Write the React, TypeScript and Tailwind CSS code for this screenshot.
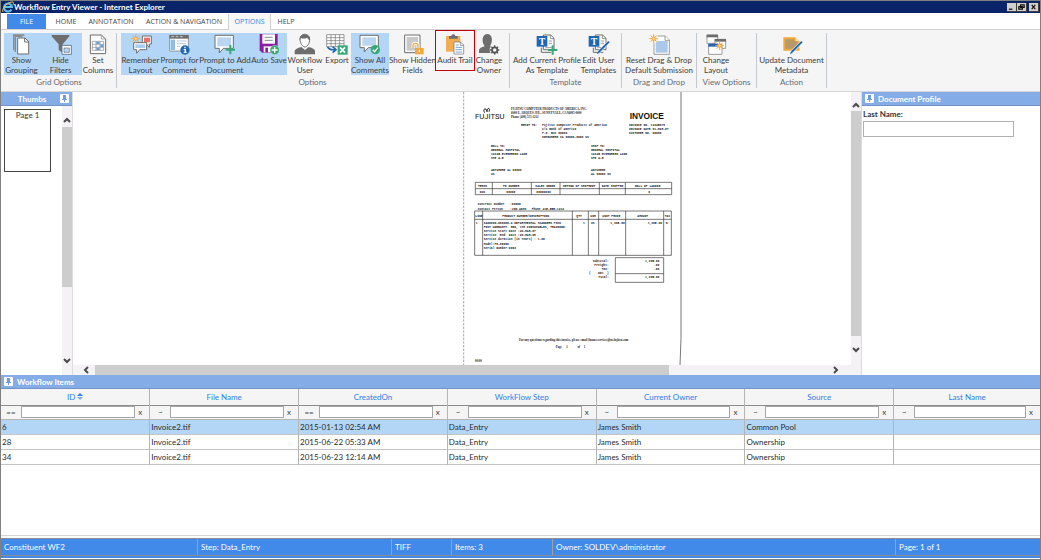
import type { ReactNode } from "react";
import clsx from "clsx";

const GRAY = "#6d6d6d";
const BLUE = "#1f66b5";
const GREEN = "#35a877";
const AMBER = "#f2a73b";

function Icon({ children }: { children: ReactNode }) {
  return (
    <svg viewBox="0 0 66 66" className="h-[22px] w-[22px] shrink-0" fill="none" aria-hidden="true">
      {children}
    </svg>
  );
}

function Star({ x, y }: { x: number; y: number }) {
  return (
    <g transform={`translate(${x} ${y})`} stroke={AMBER} strokeWidth="3">
      <path d="M0-13V13M-13 0H13M-9-9L9 9M9-9L-9 9" />
      <circle r="5" fill="#ffd993" />
    </g>
  );
}

function Plus({ x, y }: { x: number; y: number }) {
  return <path transform={`translate(${x} ${y})`} d="M0-14V14M-14 0H14" stroke={GREEN} strokeWidth="6" />;
}

function TemplatePages() {
  return (
    <>
      <path d="M22 6H44L54 16V50H22Z" fill="#fff" stroke={GRAY} strokeWidth="3" />
      <path d="M16 44V58H46" stroke={GRAY} strokeWidth="3" />
      <path d="M43 6V17H54M38 24H48M38 31H48M28 44H48" stroke={GRAY} strokeWidth="2" />
      <path d="M2 9H34V41H2Z" fill={BLUE} />
      <text x="18" y="35" textAnchor="middle" fill="#fff" fontSize="28" fontWeight="700" fontFamily="Liberation Serif, serif">
        T
      </text>
    </>
  );
}

function Pencil() {
  return (
    <>
      <path d="M31 58L62 27" stroke="#fff" strokeWidth="9" />
      <path d="M32 57L63 26" stroke={BLUE} strokeWidth="6" />
      <path d="M27 63L30 55L35 60Z" fill={BLUE} />
    </>
  );
}

const icons = {
  grouping: (
    <Icon>
      <path d="M8 52V6H40M13 57V10H34" stroke="#8a8a8a" strokeWidth="4" />
      <path d="M20 15H42L53 26V63H20Z" fill="#fff" stroke={GRAY} strokeWidth="3" />
      <path d="M41 15V27H53" stroke={GRAY} strokeWidth="3" />
    </Icon>
  ),
  filters: (
    <Icon>
      <path d="M5 6H58V10L38 34V60L26 51V34L5 10Z" fill={GRAY} />
      <path d="M36 37H64V64H36Z" fill="#fff" stroke="#5f7f9f" strokeWidth="3" />
      <path d="M42 45H58V58H42Z" fill="#b3d6f7" stroke={GRAY} strokeWidth="2" />
    </Icon>
  ),
  columns: (
    <Icon>
      <path d="M10 6H43L56 18V62H10Z" fill="#fff" stroke={GRAY} strokeWidth="3" />
      <path d="M43 6V18H56M16 25H50V52H16ZM16 34H50M16 43H50M27 25V52M39 25V52" stroke="#7d8791" strokeWidth="2" />
      <path d="M28 26H38V33H28ZM40 35H49V42H40ZM28 44H38V51H28Z" fill="#6f9dca" />
    </Icon>
  ),
  remember: (
    <Icon>
      <path d="M37 9H64V33H58V43L49 33H37Z" fill="#fff" stroke={GRAY} strokeWidth="3" />
      <path d="M42 14H60V28H42Z" fill="#ec6f68" />
      <path d="M11 29H50V50H29L20 61V50H11Z" fill="#fff" stroke={GRAY} strokeWidth="3" />
      <path d="M16 34H45V45H16Z" fill="#a9cdf0" />
      <Star x={17} y={17} />
    </Icon>
  ),
  promptComment: (
    <Icon>
      <path d="M2 7H58V54H2Z" fill="#fff" stroke={GRAY} strokeWidth="2" />
      <path d="M1 6H59V17H1Z" fill={GRAY} />
      <path d="M7 11H15M20 11H28M33 11H41" stroke="#fff" strokeWidth="2" />
      <path d="M5 20H18V51H5Z" fill="#8fbde7" />
      <path d="M24 24H52M24 32H52M24 40H34" stroke="#b0c4d8" strokeWidth="3" />
      <circle cx="48" cy="51" r="14" fill={BLUE} />
      <path d="M48 41V46M44 50H49V58M44 58H53" stroke="#fff" strokeWidth="4" />
    </Icon>
  ),
  promptAdd: (
    <Icon>
      <path d="M3 7H58V46H28L16 60V46H3Z" fill="#fff" stroke={GRAY} strokeWidth="3" />
      <path d="M10 13H51V40H10Z" fill="#b9d5f1" />
      <Plus x={49} y={50} />
    </Icon>
  ),
  autoSave: (
    <Icon>
      <path d="M5 3H59V59H12L5 52Z" fill="#8a1fa3" />
      <path d="M13 4H51V32H13Z" fill="#fff" />
      <path d="M20 13H44M20 22H44" stroke="#8a8a8a" strokeWidth="3" />
      <path d="M17 40H43V58H17Z" fill="#fff" />
      <path d="M22 44H30V58H22Z" fill="#8a1fa3" />
      <circle cx="50" cy="51" r="14" fill={GREEN} stroke="#fff" strokeWidth="1" />
      <path d="M50 42V60M41 51H59" stroke="#fff" strokeWidth="4" />
    </Icon>
  ),
  user: (
    <Icon>
      <path d="M2 64V54Q4 46 22 42L33 51L44 42Q62 46 63 54V64Z" fill={GRAY} />
      <path d="M18 18C18-1 47-1 47 18C47 32 39 42 33 42S18 32 18 18Z" fill="#fff" stroke={GRAY} strokeWidth="3" />
      <path d="M17 22C14-1 50-2 48 22C43 21 42 16 40 14C33 18 24 17 20 15Z" fill={GRAY} />
    </Icon>
  ),
  exportGrid: (
    <Icon>
      <path d="M2 5H54V41H2ZM2 14H54M2 23H54M2 32H54M15 5V41M28 5V41M41 5V41" fill="#fff" stroke={GRAY} strokeWidth="2" />
      <path d="M5 41C8 51 17 51 28 50M20 41L30 50L20 59" stroke={BLUE} strokeWidth="5" />
      <path d="M35 37H65V65H35Z" fill={GREEN} />
      <path d="M42 43L57 59M57 43L42 59" stroke="#fff" strokeWidth="5" />
    </Icon>
  ),
  showComments: (
    <Icon>
      <path d="M3 7H58V44H28L16 57V44H3Z" fill="#fff" stroke={GRAY} strokeWidth="3" />
      <path d="M10 13H51V38H10Z" fill="#b9d5f1" />
      <circle cx="49" cy="50" r="14" fill={GREEN} />
      <path d="M41 50L47 56L57 44" stroke="#fff" strokeWidth="4" />
    </Icon>
  ),
  hidden: (
    <Icon>
      <path d="M8 6H54V59H8Z" fill="#fff" stroke={GRAY} strokeWidth="3" />
      <path d="M14 12H48V53H14Z" fill="#c8c8c8" />
      <path d="M33 45V37C33 29 48 29 48 37V46" stroke="#fff" strokeWidth="9" />
      <path d="M33 45V37C33 29 48 29 48 37V46" stroke={AMBER} strokeWidth="4" />
      <path d="M39 45H65V64H39Z" fill={AMBER} />
      <path d="M52 50V58" stroke="#fff" strokeWidth="4" />
    </Icon>
  ),
  audit: (
    <Icon>
      <path d="M6 9H49V56H6Z" fill="#f0ad52" />
      <path d="M15 9H22C23 2 33 2 34 9H41V17H15Z" fill={GRAY} />
      <path d="M30 27H50L59 36V63H30Z" fill="#fff" stroke={GRAY} strokeWidth="2" />
      <path d="M49 27V37H59" stroke={GRAY} strokeWidth="2" />
      <path d="M35 36H44M35 43H54M35 50H54M35 57H54" stroke="#78a6d4" strokeWidth="3" />
    </Icon>
  ),
  owner: (
    <Icon>
      <path d="M3 60V51Q5 44 20 40C9 24 13 3 28 3S46 24 36 40L48 46V60Z" fill={GRAY} />
      <circle cx="50" cy="51" r="15" fill="#f5f5f5" />
      <circle cx="50" cy="51" r="8" stroke="#555" strokeWidth="5" />
      <path d="M50 37V43M50 59V65M36 51H42M58 51H64M40 41L45 46M55 56L60 61M60 41L55 46M45 56L40 61" stroke="#555" strokeWidth="4" />
    </Icon>
  ),
  addTemplate: (
    <Icon>
      <TemplatePages />
      <Plus x={50} y={51} />
    </Icon>
  ),
  editTemplate: (
    <Icon>
      <TemplatePages />
      <Pencil />
    </Icon>
  ),
  reset: (
    <Icon>
      <path d="M18 9H52L64 21V64H18Z" fill="#fff" stroke={GRAY} strokeWidth="2" />
      <path d="M23 24H59V59H23Z" fill="#a9c8ea" />
      <path d="M51 9V22H64" fill="#fff" stroke={GRAY} strokeWidth="2" />
      <circle cx="17" cy="17" r="14" fill="#f5f5f5" />
      <Star x={17} y={17} />
    </Icon>
  ),
  layout: (
    <Icon>
      <path d="M6 6H38V31H6Z" fill="#fff" stroke={GRAY} strokeWidth="2" />
      <path d="M5 5H39V13H5Z" fill={GRAY} />
      <path d="M30 19H62V46H30Z" fill="#fff" stroke={GRAY} strokeWidth="2" />
      <path d="M29 18H63V26H29Z" fill={GRAY} />
      <path d="M11 34H51V64H11Z" fill="#fff" stroke={GRAY} strokeWidth="2" />
      <path d="M10 32H38V41H10Z" fill={BLUE} />
      <Star x={44} y={38} />
    </Icon>
  ),
  metadata: (
    <Icon>
      <path d="M7 13H43L55 25V53H7Z" fill={AMBER} />
      <path d="M13 19H40V25H49V47H13Z" fill="#b99a67" />
      <path d="M44 12V24H56Z" fill="#ffe0ad" />
      <Pencil />
    </Icon>
  ),
};

type RibbonItem = {
  icon: keyof typeof icons;
  lines: string[];
  width: string;
  active?: boolean;
  marked?: boolean;
};

const ribbon: { label: string; className: string; items: RibbonItem[] }[] = [
  {
    label: "Grid Options",
    className: "pl-[3px] pr-0.5",
    items: [
      { icon: "grouping", lines: ["Show", "Grouping"], width: "w-[35px]", active: true },
      { icon: "filters", lines: ["Hide", "Filters"], width: "w-[43px]", active: true },
      { icon: "columns", lines: ["Set", "Columns"], width: "w-[32px]" },
    ],
  },
  {
    label: "Options",
    className: "pl-1 pr-[5px]",
    items: [
      { icon: "remember", lines: ["Remember", "Layout"], width: "w-[39px]", active: true },
      { icon: "promptComment", lines: ["Prompt for", "Comment"], width: "w-[39px]", active: true },
      { icon: "promptAdd", lines: ["Prompt to Add", "Document"], width: "w-[52px]", active: true },
      { icon: "autoSave", lines: ["Auto Save"], width: "w-[36px]", active: true },
      { icon: "user", lines: ["Workflow", "User"], width: "w-[36px]" },
      { icon: "exportGrid", lines: ["Export"], width: "w-[28px]" },
      { icon: "showComments", lines: ["Show All", "Comments"], width: "w-[38px]", active: true },
      { icon: "hidden", lines: ["Show Hidden", "Fields"], width: "w-[47px]" },
      { icon: "audit", lines: ["Audit Trail"], width: "w-[38px]", marked: true },
      { icon: "owner", lines: ["Change", "Owner"], width: "w-[30px]" },
    ],
  },
  {
    label: "Template",
    className: "px-1",
    items: [
      { icon: "addTemplate", lines: ["Add Current Profile", "As Template"], width: "w-[66px]" },
      { icon: "editTemplate", lines: ["Edit User", "Templates"], width: "w-[37px]" },
    ],
  },
  {
    label: "Drag and Drop",
    className: "px-[3px]",
    items: [{ icon: "reset", lines: ["Reset Drag & Drop", "Default Submission"], width: "w-[68px]" }],
  },
  {
    label: "View Options",
    className: "px-1",
    items: [{ icon: "layout", lines: ["Change", "Layout"], width: "w-[30px] mr-[21px]" }],
  },
  {
    label: "Action",
    className: "px-0.5",
    items: [{ icon: "metadata", lines: ["Update Document", "Metadata"], width: "w-[65px]" }],
  },
];

function RibbonButton({ item }: { item: RibbonItem }) {
  return (
    <button
      type="button"
      className={clsx(
        "relative flex h-[42px] flex-col items-center leading-[10px] whitespace-nowrap text-[#404040]",
        item.width,
        item.active && "bg-[#b3d6f7]",
      )}
    >
      {icons[item.icon]}
      {item.lines.map((line) => (
        <span key={line}>{line}</span>
      ))}
      {item.marked && <span className="absolute -inset-x-px -top-[3px] bottom-1 border border-[#c5000b]" />}
    </button>
  );
}

function Pin() {
  return (
    <svg viewBox="0 0 9 9" className="h-[9px] w-[9px] shrink-0" aria-hidden="true">
      <rect width="9" height="9" rx="1" fill="#fff" />
      <path d="M3 1H6V5H7V6H5V8H4V6H2V5H3Z" fill="#6b9ce0" />
    </svg>
  );
}

function Arrow({ dir }: { dir: "up" | "down" | "left" | "right" }) {
  const paths = {
    up: "M2 7L5 4L8 7",
    down: "M2 3L5 6L8 3",
    left: "M7 2L4 5L7 8",
    right: "M3 2L6 5L3 8",
  };
  return (
    <button type="button" aria-label={`Scroll ${dir}`} className="h-[10px] w-[10px] shrink-0">
      <svg viewBox="0 0 10 10" className="h-full w-full">
        <path d={paths[dir]} fill="none" stroke="#4a4a4a" strokeWidth="2" />
      </svg>
    </button>
  );
}

function PanelHeader({ children, className }: { children: ReactNode; className?: string }) {
  return (
    <div
      className={clsx(
        "flex h-[14px] shrink-0 items-center border-b border-[#7294c4] bg-[#84ade8] px-[3px] font-bold text-white",
        className,
      )}
    >
      {children}
    </div>
  );
}

// x, y, text [, size]
const invoiceText: [number, number, string, number?][] = [
  [144, 55, "FUJITSU COMPUTER PRODUCTS OF AMERICA, INC.", 9],
  [144, 66, "6000 E. ARQUES AVE., SUNNYVALE, CA 94085-0000", 9],
  [144, 77, "Phone (408) 555-1212", 9],
  [174, 101, "REMIT TO:"],
  [237, 101, "Fujitsu Computer Products of America"],
  [237, 114, "c/o Bank of America"],
  [237, 126, "P.O. Box 00000"],
  [237, 138, "SOMEWHERE CA 00000-0000 US"],
  [498, 101, "INVOICE NO. 12345678"],
  [498, 114, "INVOICE DATE 01-MAR-07"],
  [498, 126, "CUSTOMER NO. 00000"],
  [84, 164, "BILL TO:"],
  [84, 176, "GENERAL HOSPITAL"],
  [84, 188, "12345 EVERGREEN LANE"],
  [84, 201, "STE A-5"],
  [84, 238, "ANYWHERE AL 00000"],
  [84, 250, "US"],
  [384, 164, "SHIP TO:"],
  [384, 176, "GENERAL HOSPITAL"],
  [384, 188, "12345 EVERGREEN LANE"],
  [384, 201, "STE A-5"],
  [384, 238, "ANYWHERE"],
  [384, 250, "AL 00000 US"],
  [45, 284, "TERMS"],
  [120, 284, "PO NUMBER"],
  [217, 284, "SALES ORDER"],
  [300, 284, "METHOD OF SHIPMENT"],
  [416, 284, "DATE SHIPPED"],
  [516, 284, "BILL OF LADING"],
  [50, 302, "N30"],
  [130, 302, "00000"],
  [220, 302, "00000000"],
  [556, 302, "0"],
  [44, 338, "Contract Number   :00000"],
  [44, 353, "Contact Person    :JON ADMS   Phone 415-555-1212"],
  [37, 375, "LINE"],
  [118, 375, "PRODUCT NUMBER/DESCRIPTION"],
  [340, 375, "QTY"],
  [382, 375, "UOM"],
  [418, 375, "UNIT PRICE"],
  [523, 375, "AMOUNT"],
  [605, 375, "TAX"],
  [38, 396, "1"],
  [62, 396, "CA00000-000000-A DEPARTMENTAL SCANNERS PICK"],
  [62, 408, "POST WARRANTY. RED, 1YR CONSUMABLES, TRAINING."],
  [62, 420, "Service Start Date :20-MAR-07"],
  [62, 433, "Service  End  Date :20-MAR-08"],
  [62, 445, "Service duration (in Years) : 1.00"],
  [62, 458, "Model:FI-00000"],
  [62, 470, "Serial Number:0003"],
  [360, 396, "1"],
  [384, 396, "US"],
  [442, 396, "1,395.00"],
  [554, 396, "1,395.00"],
  [608, 396, "N"],
  [389, 510, "Subtotal:"],
  [394, 523, "Freight:"],
  [416, 535, "Tax:"],
  [378, 547, "(   .00%  )"],
  [406, 559, "Total:"],
  [546, 510, "1,395.00"],
  [573, 523, ".00"],
  [573, 535, ".00"],
  [546, 559, "1,395.00"],
  [36, 811, "00/00", 9],
];

function Invoice() {
  return (
    <svg viewBox="0 0 660 819" className="block h-[273px] w-[220px]" role="img" aria-label="Invoice page 1">
      <rect width="654" height="819" fill="#fff" />
      <path d="M2 0V819" stroke="#777" strokeWidth="2" strokeDasharray="7 4" />
      <path d="M654 0V740L651 819" fill="none" stroke="#777" strokeWidth="3" />
      <g fill="#111">
        <text x="36" y="82" fontSize="23" fontFamily="Roboto, sans-serif">
          FUJITSU
        </text>
        <path d="M65 62C57 50 70 46 72 58M72 60C70 46 84 46 78 59" fill="none" stroke="#111" strokeWidth="3" />
        <text x="500" y="81" fontSize="25" fontWeight="700" fontFamily="Liberation Sans, sans-serif">
          INVOICE
        </text>
      </g>
      <g fontFamily="Liberation Mono, monospace" fontWeight="700" fill="#222">
        {invoiceText.map(([x, y, text, size]) => (
          <text
            key={`${x}-${y}`}
            x={x}
            y={y}
            fontSize={size ?? 9}
            className="whitespace-pre"
            fontFamily={size ? "Liberation Serif, serif" : undefined}
          >
            {text}
          </text>
        ))}
      </g>
      <g fontFamily="Liberation Serif, serif" fontSize="9" fontWeight="700" fill="#222">
        <text x="168" y="747">
          For any questions regarding this invoice, please email financeservices@us.fujitsu.com
        </text>
        <text x="278" y="769" className="whitespace-pre">
          Page      1             of     1
        </text>
      </g>
      <path
        d="M37 271H626V308H37ZM37 290H626M88 271V308M205 271V308M291 271V308M409 271V308M487 271V308M35 357H625V490H35ZM35 382H625M59 357V490M328 357V490M376 357V490M407 357V490M488 357V490M602 357V490M457 497H602V571H457ZM457 545H602"
        fill="none"
        stroke="#333"
        strokeWidth="2"
      />
    </svg>
  );
}

const tabs = ["HOME", "ANNOTATION", "ACTION & NAVIGATION", "OPTIONS", "HELP"];

const columns = [
  { name: "ID", op: "==" },
  { name: "File Name", op: "~" },
  { name: "CreatedOn", op: "==" },
  { name: "WorkFlow Step", op: "~" },
  { name: "Current Owner", op: "~" },
  { name: "Source", op: "~" },
  { name: "Last Name", op: "~" },
];

const rows = [
  ["6", "Invoice2.tif", "2015-01-13 02:54 AM", "Data_Entry", "James Smith", "Common Pool", ""],
  ["28", "Invoice2.tif", "2015-06-22 05:33 AM", "Data_Entry", "James Smith", "Ownership", ""],
  ["34", "Invoice2.tif", "2015-06-23 12:14 AM", "Data_Entry", "James Smith", "Ownership", ""],
];

const status = ["Constituent WF2", "Step: Data_Entry", "TIFF", "Items: 3", "Owner: SOLDEV\\administrator", "Page: 1 of 1"];

function TitleBar() {
  return (
    <header className="flex h-[12px] shrink-0 items-center bg-[#0a246a] pr-px pl-px text-white">
      <svg viewBox="0 0 12 12" className="h-3 w-3" aria-hidden="true">
        <path d="M9.5 8.5A4 4 0 1 1 10 6H3" fill="none" stroke="#5fc0f2" strokeWidth="2" />
        <path d="M1 11C-1 8 6 0 11 1C12 2 11 3 11 4" fill="none" stroke="#f5c543" strokeWidth="1" />
      </svg>
      <h1 className="flex-1 font-bold">Workflow Entry Viewer - Internet Explorer</h1>
      {[
        { label: "Minimize", d: "M2 7H6" },
        { label: "Restore", d: "M4 2H8V5H4ZM2 4H6V7H2Z" },
        { label: "Close", d: "M3 2L7 7M7 2L3 7" },
      ].map(({ label, d }) => (
        <button
          key={label}
          type="button"
          aria-label={label}
          className="h-[9px] w-[10px] border-r border-b border-[#404040] bg-[#d4d0c8] last:ml-0.5"
        >
          <svg viewBox="0 0 10 9" className="h-full w-full">
            <path d={d} fill="none" stroke="#111" strokeWidth="1.4" />
          </svg>
        </button>
      ))}
    </header>
  );
}

function Tabs() {
  return (
    <nav className="flex h-[17px] shrink-0 items-stretch border-b border-[#d0d0d0] bg-white pt-px pl-1.5 font-['Open_Sans',sans-serif] text-[7px] text-[#444]">
      <button type="button" className="w-[39px] bg-[#418ae9] text-white">
        FILE
      </button>
      {tabs.map((tab) => (
        <button
          key={tab}
          type="button"
          className={clsx(
            "whitespace-nowrap",
            tab === "OPTIONS"
              ? "-mb-px w-[43px] border-x border-[#d0d0d0] bg-[#f7f7f7] text-[#2f7fe6]"
              : tab === "HOME"
                ? "w-[40px]"
                : tab === "ANNOTATION"
                  ? "w-[50px]"
                  : tab === "HELP"
                    ? "w-[30px]"
                    : "w-[92px] pl-1",
          )}
        >
          {tab}
        </button>
      ))}
    </nav>
  );
}

function WorkflowGrid() {
  return (
    <table className="w-full table-fixed border-collapse">
      <colgroup>
        {columns.map((col, i) => (
          <col key={col.name} className={i < 6 ? "w-[14.32%]" : ""} />
        ))}
      </colgroup>
      <thead className="bg-[#f5f5f5]">
        <tr className="h-4 border-b border-[#8c8c8c]">
          {columns.map((col) => (
            <th key={col.name} className="border-r border-[#b5b5b5] p-0 font-normal text-[#2f7fe6] last:border-r-0">
              <button type="button" className="inline-flex items-center gap-0.5">
                {col.name}
                {col.name === "ID" && (
                  <svg viewBox="0 0 6 7" className="h-[7px] w-1.5">
                    <path d="M0 3L3 0L6 3Z" fill="#2f7fe6" />
                    <path d="M0 4H6L3 7Z" fill="#7cb0f2" />
                  </svg>
                )}
              </button>
            </th>
          ))}
        </tr>
        <tr className="h-[14px] border-b border-[#b5b5b5]">
          {columns.map((col) => (
            <td key={col.name} className="border-r border-[#b5b5b5] p-0 last:border-r-0">
              <div className="flex items-center leading-3">
                <button type="button" aria-label={`${col.name} filter operator`} className="w-5 shrink-0 text-[#444]">
                  {col.op}
                </button>
                <input
                  aria-label={`Filter ${col.name}`}
                  className="h-3 min-w-0 flex-1 border border-[#a6a6a6] bg-white px-0.5"
                />
                <button
                  type="button"
                  aria-label={`Clear ${col.name} filter`}
                  className="w-[14px] shrink-0 pr-1 text-[#444]"
                >
                  x
                </button>
              </div>
            </td>
          ))}
        </tr>
      </thead>
      <tbody>
        {rows.map((row, i) => (
          <tr key={row[0]} className={clsx("h-[15px] border-b border-[#c4c4c4]", i === 0 ? "bg-[#b3d6f7]" : "bg-white")}>
            {row.map((cell, j) => (
              <td key={columns[j].name} className="border-r border-[#b5b5b5] px-px py-0 text-[#2b2b2b] last:border-r-0">
                {cell}
              </td>
            ))}
          </tr>
        ))}
      </tbody>
    </table>
  );
}

export default function App() {
  return (
    <div className="flex min-h-screen flex-col border border-[#808080] bg-white font-[Lato,sans-serif] text-[8px] leading-3 text-[#333]">
      <TitleBar />
      <Tabs />

      <div className="flex h-[62px] shrink-0 border-b border-[#d5d5d5] bg-[#f5f5f5] pt-[3px] pb-[3px]">
        {ribbon.map((group) => (
          <section
            key={group.label}
            className={clsx("flex flex-col justify-between border-r border-[#c3c9ce]", group.className)}
          >
            <div className="flex">
              {group.items.map((item) => (
                <RibbonButton key={item.icon} item={item} />
              ))}
            </div>
            <h2 className="text-center leading-3 text-[#666a75]">{group.label}</h2>
          </section>
        ))}
      </div>

      <div className="flex h-[283px] shrink-0">
        <aside className="flex w-[72px] shrink-0 flex-col border-r border-[#dcdcdc]">
          <PanelHeader>
            <span className="flex-1 text-center">Thumbs</span>
            <Pin />
          </PanelHeader>
          <div className="flex flex-1 justify-between">
            <button
              type="button"
              className="mt-[3px] ml-[3px] flex h-[63px] w-[47px] justify-center border border-[#444] leading-[10px]"
            >
              Page 1
            </button>
            <div className="flex w-[10px] flex-col bg-[#f5f2f6] pt-[9px] pb-[9px]">
              <Arrow dir="up" />
              <div className="mt-0.5 flex-1">
                <div className="h-[70%] bg-[#cdcdcd]" />
              </div>
              <Arrow dir="down" />
            </div>
          </div>
        </aside>

        <main className="flex min-w-0 flex-1 flex-col">
          <div className="flex min-h-0 flex-1">
            <div className="flex-1">
              <div className="ml-[50%] pl-px">
                <Invoice />
              </div>
            </div>
            <div className="flex w-[10px] flex-col bg-[#f5f2f6] pt-2 pb-[10px]">
              <Arrow dir="up" />
              <div className="mt-px flex-1">
                <div className="h-[96%] bg-[#cdcdcd]" />
              </div>
              <Arrow dir="down" />
            </div>
          </div>
          <div className="flex h-[10px] bg-[#f5f2f6] pr-5 pl-2">
            <Arrow dir="left" />
            <div className="ml-1 flex-1">
              <div className="h-full w-[78%] bg-[#cdcdcd]" />
            </div>
            <Arrow dir="right" />
          </div>
        </main>

        <aside className="w-[179px] shrink-0 border-l border-[#dcdcdc]">
          <PanelHeader className="gap-1">
            <Pin />
            <span>Document Profile</span>
          </PanelHeader>
          <div className="flex flex-col px-px pt-px">
            <label htmlFor="last-name" className="leading-[14px] font-bold">
              Last Name:
            </label>
            <input id="last-name" className="h-4 w-[151px] border border-[#b0b0b0] px-1" />
          </div>
        </aside>
      </div>

      <section className="flex-1">
        <PanelHeader className="gap-1">
          <Pin />
          <span>Workflow Items</span>
        </PanelHeader>
        <WorkflowGrid />
      </section>

      <footer className="shrink-0 border-t border-[#d5d5d5] pt-0.5 pb-px">
        <div className="border-b-2 border-[#418ae9]">
          <div className="grid grid-cols-[197fr_194fr_60fr_101fr_343fr_144fr] border-y border-[#8c8c8c] bg-[#418ae9] text-white">
            {status.map((text) => (
              <span key={text} className="border-r border-[#a0a0a0] pl-[3px] leading-4 last:border-r-0">
                {text}
              </span>
            ))}
          </div>
        </div>
      </footer>
    </div>
  );
}
